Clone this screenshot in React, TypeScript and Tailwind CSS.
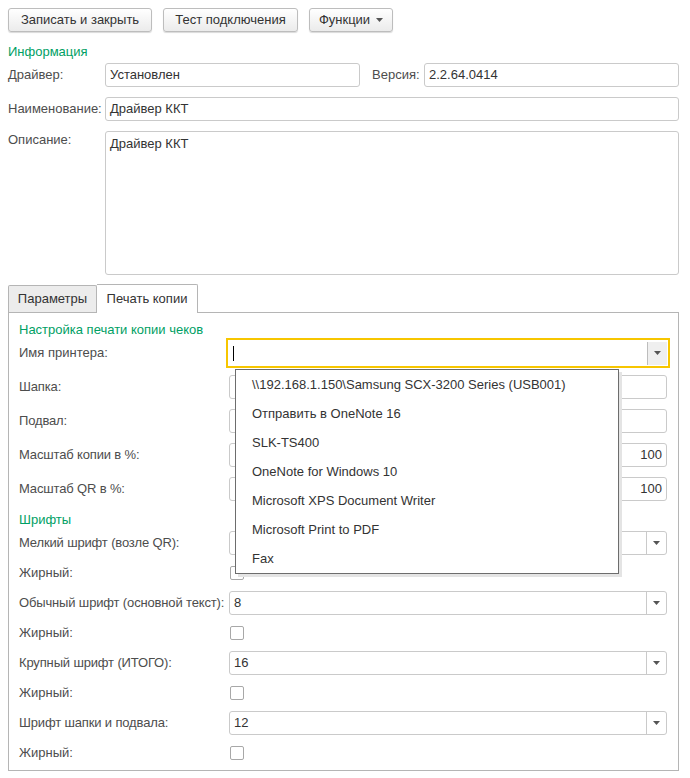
import React from "react";

const printers = [
  "\\\\192.168.1.150\\Samsung SCX-3200 Series (USB001)",
  "Отправить в OneNote 16",
  "SLK-TS400",
  "OneNote for Windows 10",
  "Microsoft XPS Document Writer",
  "Microsoft Print to PDF",
  "Fax",
];

function Arrow() {
  return (
    <svg width="7" height="4" viewBox="0 0 7 4">
      <path d="M0 0h7L3.5 4z" fill="#555" />
    </svg>
  );
}

function Button({ children, w }: { children: React.ReactNode; w: string }) {
  return (
    <button
      className={`${w} h-[24px] flex items-center justify-center gap-[6px] rounded-[3px] border border-[#bdbdbd] bg-gradient-to-b from-white to-[#ebebeb] text-[#333] shadow-[0_1px_1px_rgba(0,0,0,0.15)]`}
    >
      {children}
    </button>
  );
}

function Field({
  value,
  className = "",
  right = false,
}: {
  value?: string;
  className?: string;
  right?: boolean;
}) {
  return (
    <div
      className={`h-[24px] flex items-center rounded-[3px] border border-[#cacaca] bg-white px-[4px] text-[#333] ${
        right ? "justify-end" : ""
      } ${className}`}
    >
      {value}
    </div>
  );
}

function SelectField({ value }: { value?: string }) {
  return (
    <div className="flex-1 h-[24px] flex items-center rounded-[3px] border border-[#cacaca] bg-white text-[#333]">
      <span className="flex-1 pl-[4px]">{value}</span>
      <span className="w-[20px] h-[22px] flex items-center justify-center border-l border-[#cacaca]">
        <Arrow />
      </span>
    </div>
  );
}

function Row({
  label,
  children,
  className = "mt-[10px]",
}: {
  label: string;
  children: React.ReactNode;
  className?: string;
}) {
  return (
    <div className={`flex items-center h-[24px] ${className}`}>
      <span className="w-[210px] shrink-0 whitespace-nowrap tracking-[-0.15px]">{label}</span>
      {children}
    </div>
  );
}

function CheckRow({ label }: { label: string }) {
  return (
    <div className="flex items-center h-[24px] mt-[6px]">
      <span className="w-[211px] shrink-0">{label}</span>
      <span className="w-[14px] h-[14px] rounded-[2px] border border-[#a8a8a8] bg-white" />
    </div>
  );
}

export default function App() {
  return (
    <div className="relative w-[690px] h-[778px] overflow-hidden bg-white pl-2 pr-[11px] text-[13px] text-[#4d4d4d] font-['Liberation_Sans',Arial,sans-serif]">
      {/* toolbar */}
      <div className="flex gap-[11px] pt-2">
        <Button w="w-[144px]">Записать и закрыть</Button>
        <Button w="w-[135px]">Тест подключения</Button>
        <Button w="w-[84px]">
          Функции
          <Arrow />
        </Button>
      </div>

      <div className="mt-[10px] h-[20px] leading-[20px] text-[#00a064]">Информация</div>

      <div className="mt-[1px] flex items-center h-[24px]">
        <span className="w-[97px] shrink-0">Драйвер:</span>
        <Field value="Установлен" className="w-[255px]" />
        <span className="ml-[12px] w-[52px] shrink-0">Версия:</span>
        <Field value="2.2.64.0414" className="flex-1" />
      </div>

      <div className="mt-[10px] flex items-center h-[24px]">
        <span className="w-[97px] shrink-0">Наименование:</span>
        <Field value="Драйвер ККТ" className="flex-1" />
      </div>

      <div className="mt-[10px] flex">
        <span className="w-[97px] shrink-0 -mt-[1px]">Описание:</span>
        <div className="flex-1 h-[144px] rounded-[3px] border border-[#cacaca] bg-white px-[4px] pt-[2px] text-[#333]">
          Драйвер ККТ
        </div>
      </div>

      {/* tabs */}
      <div className="mt-[10px] flex items-end h-[27px]">
        <div className="w-[89px] h-[27px] flex items-center justify-center border border-b-0 border-[#b5b5b5] rounded-t-[2px] bg-[#ececec] text-[#333]">
          Параметры
        </div>
        <div className="relative z-10 -mb-px w-[101px] h-[29px] flex items-center justify-center border border-l-0 border-b-0 border-[#b5b5b5] rounded-tr-[2px] bg-white text-[#333]">
          Печать копии
        </div>
      </div>

      <div className="w-[671px] border border-[#b5b5b5] pl-[10px] pr-[11px] pt-[7px] pb-[5px]">
        <div className="h-[18px] leading-[20px] text-[#00a064]">Настройка печати копии чеков</div>

        <div className="flex items-center h-[30px]">
          <span className="w-[207px] shrink-0">Имя принтера:</span>
          <div className="flex-1 -mr-[3px] h-[30px] flex items-center border-2 border-[#f7c600] bg-white">
            <span className="ml-[5px] w-px h-[15px] bg-black" />
            <span className="flex-1" />
            <span className="mr-[1px] w-[20px] h-[23px] flex items-center justify-center border-l border-[#bdbdbd] bg-[#efefef]">
              <Arrow />
            </span>
          </div>
        </div>

        <Row label="Шапка:" className="mt-[7px]">
          <Field className="flex-1" />
        </Row>
        <Row label="Подвал:">
          <Field className="flex-1" />
        </Row>
        <Row label="Масштаб копии в %:">
          <Field className="flex-1" value="100" right />
        </Row>
        <Row label="Масштаб QR в %:">
          <Field className="flex-1" value="100" right />
        </Row>

        <div className="mt-[9px] h-[19px] leading-[20px] text-[#00a064]">Шрифты</div>

        <Row label="Мелкий шрифт (возле QR):" className="mt-[2px]">
          <SelectField />
        </Row>
        <CheckRow label="Жирный:" />
        <Row label="Обычный шрифт (основной текст):" className="mt-[6px]">
          <SelectField value="8" />
        </Row>
        <CheckRow label="Жирный:" />
        <Row label="Крупный шрифт (ИТОГО):" className="mt-[6px]">
          <SelectField value="16" />
        </Row>
        <CheckRow label="Жирный:" />
        <Row label="Шрифт шапки и подвала:" className="mt-[6px]">
          <SelectField value="12" />
        </Row>
        <CheckRow label="Жирный:" />
      </div>

      {/* printer list popup */}
      <div className="absolute left-[235px] top-[369px] w-[384px] border border-[#6d6d6d] bg-white text-[#333] shadow-[3px_3px_0_#e4e4e4]">
        {printers.map((p) => (
          <div key={p} className="h-[29px] flex items-center pl-[16px]">
            {p}
          </div>
        ))}
      </div>
    </div>
  );
}
